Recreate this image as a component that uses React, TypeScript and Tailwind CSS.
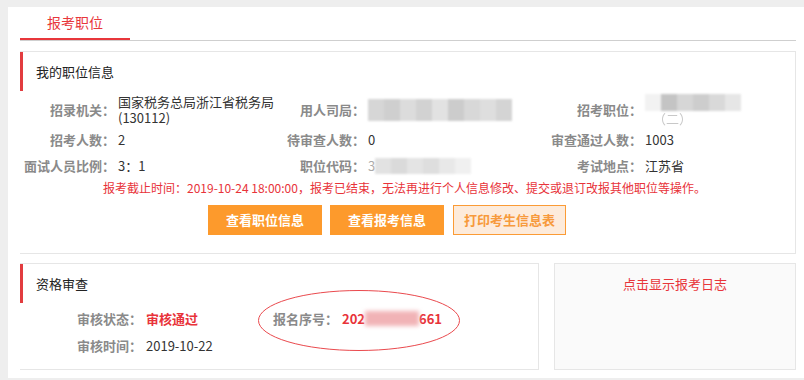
import React from 'react'

const font = { fontFamily: '"Noto Sans CJK SC", "Noto Sans", sans-serif' }

// mosaic blocks standing in for redacted values
function Mosaic({ shades, h = 'h-[20px]' }: { shades: string[]; h?: string }) {
  return (
    <span className={`inline-flex ${h} blur-[1px] align-middle`}>
      {shades.map((c, i) => (
        <span key={i} className="w-[16px] h-full" style={{ background: c }} />
      ))}
    </span>
  )
}

function Label({ children }: { children: React.ReactNode }) {
  return <div className="text-right font-bold text-[#8a8a8a] leading-[26px]">{children}</div>
}

function SectionTitle({ children }: { children: React.ReactNode }) {
  return (
    <div className="flex items-center h-[39px] border-l-[3px] border-[#e23c3f] pl-[13px] text-[13px] text-[#222]">
      {children}
    </div>
  )
}

export default function App() {
  return (
    <div className="w-[804px] h-[380px] bg-[#eeeeee] pt-[7px] pl-[8px] overflow-hidden" style={font}>
      <div className="bg-white h-[371px] pl-[12px] pr-[8px]">
        {/* Tabs */}
        <div className="flex h-[34px] border-b border-[#cfcfcf]">
          <div className="w-[110px] h-[33px] flex items-center justify-center text-[14px] text-[#e8363b] border-b-2 border-[#e8363b]">
            报考职位
          </div>
        </div>

        {/* 我的职位信息 */}
        <div className="mt-[10px] border border-[#e6e6e6] border-l-0 h-[203px]">
          <SectionTitle>我的职位信息</SectionTitle>
          <div className="mt-[2px] text-[13px] grid grid-cols-[95px_164px_86px_175px_102px_1fr] items-center">
            <Label>招录机关：</Label>
            <div className="pl-[3px] leading-4 py-px text-[#333]">国家税务总局浙江省税务局(130112)</div>
            <Label>用人司局：</Label>
            <div className="pl-[3px]">
              <Mosaic h="h-[22px]" shades={['#d6d6d6', '#cfcfcf', '#dcdcdc', '#d2d2d2', '#e2e2e2', '#cccccc', '#d8d8d8', '#dedede', '#d4d4d4']} />
            </div>
            <Label>招考职位：</Label>
            <div className="pl-[3px] flex flex-col">
              <Mosaic h="h-[17px]" shades={['#f2f2f2', '#c4c4c4', '#d6d6d6', '#cdcdcd', '#d9d9d9', '#e6e6e6']} />
              <span className="text-[#c8c8c8] blur-[0.6px] leading-4 pl-[8px]">（二）</span>
            </div>

            <Label>招考人数：</Label>
            <div className="pl-[3px] text-[#333]">2</div>
            <Label>待审查人数：</Label>
            <div className="pl-[3px] text-[#333]">0</div>
            <Label>审查通过人数：</Label>
            <div className="pl-[3px] text-[#333]">1003</div>

            <Label>面试人员比例：</Label>
            <div className="pl-[3px] text-[#333]">3：1</div>
            <Label>职位代码：</Label>
            <div className="pl-[3px] flex items-center text-[#aaa]">
              <span>3</span>
              <Mosaic h="h-[16px]" shades={['#e2e2e2', '#dadada', '#e4e4e4', '#dedede', '#e8e8e8', '#f0f0f0']} />
            </div>
            <Label>考试地点：</Label>
            <div className="pl-[3px] text-[#333]">江苏省</div>
          </div>
          <div className="pl-[83px] text-[12px] leading-[18px] text-[#e8333a]">
            报考截止时间：2019-10-24 18:00:00，报考已结束，无法再进行个人信息修改、提交或退订改报其他职位等操作。
          </div>
          <div className="mt-[8px] flex gap-[8px] pl-[188px]">
            <button className="w-[114px] h-[30px] bg-[#fd9a2c] text-white font-bold text-[13px]">查看职位信息</button>
            <button className="w-[114px] h-[30px] bg-[#fd9a2c] text-white font-bold text-[13px]">查看报考信息</button>
            <button className="w-[113px] h-[30px] ml-[1px] bg-[#fdebdb] border border-[#fb9b35] text-[#f79a3c] font-bold text-[13px]">打印考生信息表</button>
          </div>
        </div>

        {/* 资格审查 + 日志 */}
        <div className="mt-[9px] flex gap-[15px]">
          <div className="relative w-[519px] h-[107px] border border-[#e6e6e6] border-l-0">
            <SectionTitle>资格审查</SectionTitle>
            <div className="mt-[2px] text-[13px] grid grid-cols-[122px_118px_78px_1fr] items-center">
              <div className="text-right font-bold text-[#8a8a8a] leading-[27px]">审核状态：</div>
              <div className="pl-[4px] font-bold text-[#e8333a]">审核通过</div>
              <div className="text-right font-bold text-[#8a8a8a] leading-[27px]">报名序号：</div>
              <div className="pl-[4px] font-bold text-[#e8333a] flex items-center">
                <span>202</span>
                <span className="inline-block w-[54px] h-[15px] bg-[#f1b3b6] blur-[2px]" />
                <span>661</span>
              </div>
              <div className="text-right font-bold text-[#8a8a8a] leading-[27px]">审核时间：</div>
              <div className="pl-[4px] text-[#333]">2019-10-22</div>
            </div>
            <svg className="absolute left-[237px] top-[25px]" width="204" height="63" viewBox="0 0 204 63">
              <ellipse cx="102" cy="31.5" rx="100.5" ry="30" fill="none" stroke="#ea4a4e" strokeWidth="1" />
            </svg>
          </div>
          <div className="w-[242px] h-[107px] bg-[#fafafa] border border-[#e6e6e6] text-center pt-[10px] text-[13px] text-[#e8363b]">
            点击显示报考日志
          </div>
        </div>
      </div>
    </div>
  )
}
